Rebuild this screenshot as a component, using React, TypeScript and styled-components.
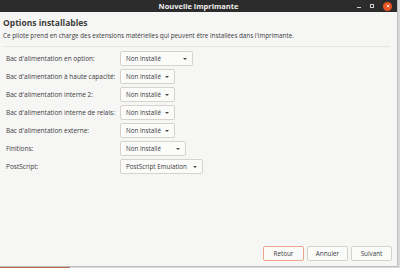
import React from 'react';
import styled, { createGlobalStyle } from 'styled-components';

const GlobalStyle = createGlobalStyle`
  html, body {
    margin: 0;
    padding: 0;
    background: #d9d9d9;
  }
  body {
    font-family: 'Open Sans', 'DejaVu Sans', sans-serif;
  }
`;

const options = [
  { label: "Bac d'alimentation en option:", value: 'Non installé', width: 73 },
  { label: "Bac d'alimentation à haute capacité:", value: 'Non installé', width: 55 },
  { label: "Bac d'alimentation interne 2:", value: 'Non installé', width: 55 },
  { label: "Bac d'alimentation interne de relais:", value: 'Non installé', width: 55 },
  { label: "Bac d'alimentation externe:", value: 'Non installé', width: 55 },
  { label: 'Finitions:', value: 'Non installé', width: 66 },
  { label: 'PostScript:', value: 'PostScript Emulation', width: 83 },
];

const App = () => {
  return (
    <>
      <GlobalStyle />
      <Screen>
        <Window>
          <TitleBar>
            <span className="title">Nouvelle imprimante</span>
            <WindowControls>
              <Minimize />
              <Maximize />
              <Close>
                <svg width="6" height="6" viewBox="0 0 6 6">
                  <path d="M1 1 L5 5 M5 1 L1 5" stroke="#fff" strokeWidth="1.2" />
                </svg>
              </Close>
            </WindowControls>
          </TitleBar>
          <Content>
            <Heading>Options installables</Heading>
            <Description>
              Ce pilote prend en charge des extensions matérielles qui peuvent être installées dans l'imprimante.
            </Description>
            <Separator />
            <OptionsGrid>
              {options.map((opt) => (
                <React.Fragment key={opt.label}>
                  <Label>{opt.label}</Label>
                  <Dropdown $width={opt.width}>
                    <span>{opt.value}</span>
                    <Arrow />
                  </Dropdown>
                </React.Fragment>
              ))}
            </OptionsGrid>
            <Footer>
              <Button $focused>Retour</Button>
              <Button>Annuler</Button>
              <Button>Suivant</Button>
            </Footer>
          </Content>
        </Window>
        <Taskbar />
      </Screen>
    </>
  );
};

export default App;

const Screen = styled.div`
  width: 400px;
  height: 268px;
  overflow: hidden;
  position: relative;
`;

const Window = styled.div`
  width: 398px;
  height: 267px;
  display: flex;
  flex-direction: column;
  background: #f6f6f5;
  border-right: 1px solid #bdbdbd;
  border-bottom: 1px solid #bdbdbd;
  box-sizing: border-box;
`;

const TitleBar = styled.div`
  height: 12px;
  flex: none;
  background: #2c2c2c;
  display: flex;
  align-items: center;
  justify-content: center;
  position: relative;
  .title {
    color: #eeeeec;
    font-size: 7.5px;
    font-weight: 700;
    line-height: 12px;
  }
`;

const WindowControls = styled.div`
  position: absolute;
  right: 5px;
  top: 0;
  height: 12px;
  display: flex;
  align-items: center;
  gap: 9px;
`;

const Minimize = styled.div`
  width: 4px;
  height: 1px;
  background: #cfcfcf;
  margin-top: 3px;
`;

const Maximize = styled.div`
  width: 4px;
  height: 4px;
  border: 1px solid #cfcfcf;
  box-sizing: border-box;
`;

const Close = styled.div`
  width: 9px;
  height: 9px;
  border-radius: 50%;
  background: #e95420;
  display: flex;
  align-items: center;
  justify-content: center;
  svg {
    width: 4px;
    height: 4px;
  }
`;

const Content = styled.div`
  flex: 1;
  display: flex;
  flex-direction: column;
  padding: 5px 5px 5px 3px;
`;

const Heading = styled.div`
  font-size: 8.5px;
  font-weight: 700;
  color: #3c3c3c;
  line-height: 12px;
`;

const Description = styled.div`
  margin-top: 2px;
  font-size: 6.3px;
  color: #3c3c3c;
  line-height: 9px;
`;

const Separator = styled.div`
  height: 1px;
  background: #e4e4e2;
  margin: 6px 2px 0 0;
`;

const OptionsGrid = styled.div`
  display: grid;
  grid-template-columns: 114px auto;
  grid-auto-rows: 15px;
  row-gap: 3px;
  align-items: center;
  justify-items: start;
  margin-top: 4px;
  padding-left: 3px;
`;

const Label = styled.div`
  font-size: 6.5px;
  color: #3c3c3c;
  white-space: nowrap;
`;

const Dropdown = styled.div<{ $width: number }>`
  width: ${({ $width }) => $width}px;
  height: 15px;
  box-sizing: border-box;
  border: 1px solid #d5d2cf;
  border-radius: 2px;
  background: #fbfbfa;
  display: flex;
  align-items: center;
  justify-content: space-between;
  padding: 0 5px 0 5px;
  font-size: 6.3px;
  color: #3c3c3c;
  white-space: nowrap;
`;

const Arrow = styled.div`
  width: 0;
  height: 0;
  border-left: 2.5px solid transparent;
  border-right: 2.5px solid transparent;
  border-top: 2.5px solid #4a4a4a;
  margin-left: 3px;
`;

const Footer = styled.div`
  margin-top: auto;
  display: flex;
  justify-content: flex-end;
  gap: 3px;
`;

const Button = styled.button<{ $focused?: boolean }>`
  width: 41px;
  height: 15px;
  box-sizing: border-box;
  border: 1px solid ${({ $focused }) => ($focused ? '#eca48a' : '#d3d0cd')};
  border-radius: 2px;
  background: #fbfbfa;
  font-family: 'Open Sans', 'DejaVu Sans', sans-serif;
  font-size: 6.3px;
  color: #3c3c3c;
  padding: 0;
`;

const Taskbar = styled.div`
  position: absolute;
  left: 0;
  bottom: 0;
  width: 70px;
  height: 1px;
  background: #b46a4c;
`;
